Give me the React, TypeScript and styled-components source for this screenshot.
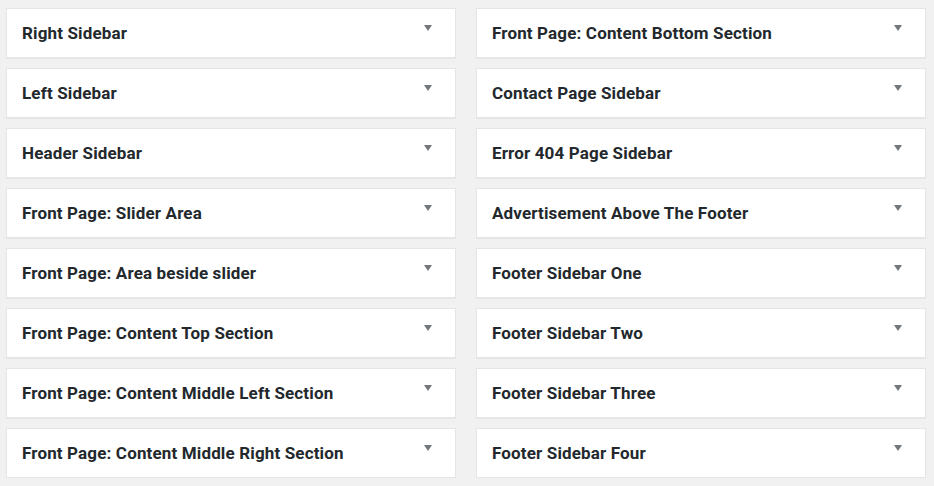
import React from "react";
import styled, { createGlobalStyle } from "styled-components";

const Global = createGlobalStyle`
  html, body { margin: 0; padding: 0; background: #f1f1f1; }
  body { font-family: Roboto, "Noto Sans", Arial, sans-serif; }
`;

const Grid = styled.div`
  display: grid;
  grid-template-columns: 450px 450px;
  column-gap: 20px;
  padding: 8px 0 0 6px;
`;

const Column = styled.div`
  display: flex;
  flex-direction: column;
  gap: 10px;
`;

const WidgetTop = styled.div`
  box-sizing: border-box;
  height: 50px;
  background: #fff;
  border: 1px solid #e5e5e5;
  box-shadow: 0 1px 1px rgba(0, 0, 0, 0.04);
  display: flex;
  align-items: center;
  justify-content: space-between;
  padding: 0 23px 0 15px;
`;

const Title = styled.h3`
  margin: 0;
  font-size: 17px;
  letter-spacing: 0.15px;
  font-weight: 700;
  color: #23282d;
  line-height: 1;
  padding-top: 1px;
`;

const Arrow = styled.span`
  width: 0;
  height: 0;
  border-left: 4.5px solid transparent;
  border-right: 4.5px solid transparent;
  border-top: 6px solid #72777c;
  margin-top: -10px;
`;

const left = [
  "Right Sidebar",
  "Left Sidebar",
  "Header Sidebar",
  "Front Page: Slider Area",
  "Front Page: Area beside slider",
  "Front Page: Content Top Section",
  "Front Page: Content Middle Left Section",
  "Front Page: Content Middle Right Section",
];
const right = [
  "Front Page: Content Bottom Section",
  "Contact Page Sidebar",
  "Error 404 Page Sidebar",
  "Advertisement Above The Footer",
  "Footer Sidebar One",
  "Footer Sidebar Two",
  "Footer Sidebar Three",
  "Footer Sidebar Four",
];

const Col = ({ items }: { items: string[] }) => (
  <Column>
    {items.map((t) => (
      <WidgetTop key={t}>
        <Title>{t}</Title>
        <Arrow />
      </WidgetTop>
    ))}
  </Column>
);

export default function App() {
  return (
    <>
      <Global />
      <Grid>
        <Col items={left} />
        <Col items={right} />
      </Grid>
    </>
  );
}
